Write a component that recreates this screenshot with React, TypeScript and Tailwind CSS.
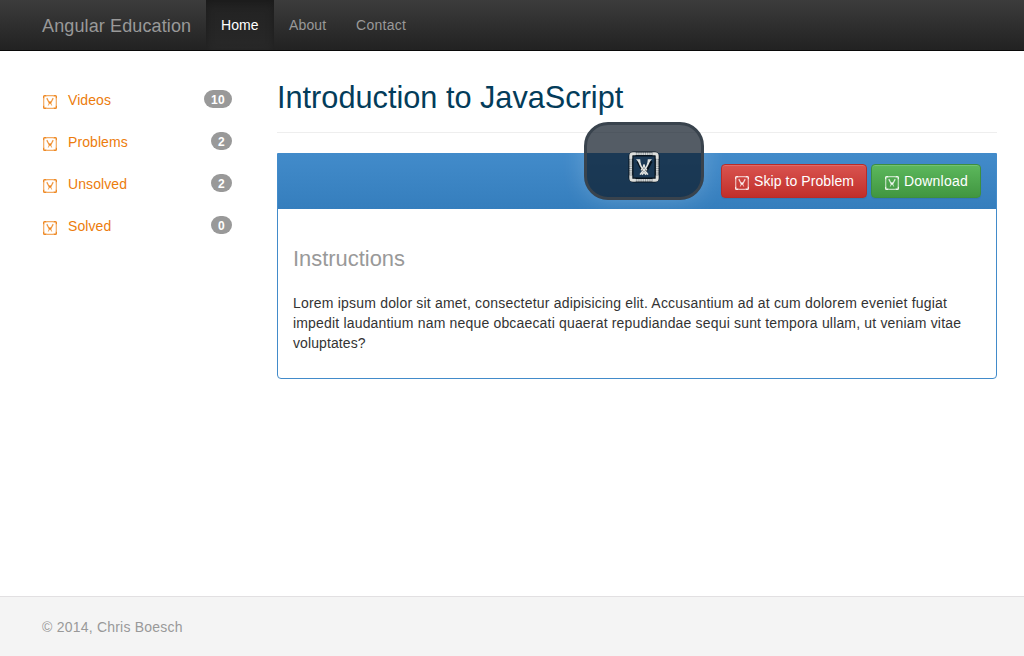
import React from "react";

function Emblem({ className }: { className: string }) {
  return (
    <svg viewBox="0 0 14 14" className={className} fill="none" stroke="currentColor" aria-hidden="true">
      <path d="M.7 3.500V1.500Q.7.700 1.500.700H3.500M10.500.700h2q.8 0 .8.800v2M13.300 10.500v2q0 .8-.8.800h-2M3.500 13.300h-2q-.8 0-.8-.8v-2" strokeWidth="1.400" opacity=".9" />
      <path d="M3.500.700h7M3.500 13.300h7M.7 3.500v7M13.300 3.500v7" strokeWidth="1.200" opacity=".65" />
      <path d="M3.700 3.300C5 4.500 4.900 6.800 7 8.500M10.300 3.300C9 4.500 9.100 6.800 7 8.500" strokeWidth="1.200" opacity=".8" />
      <path d="M7 6.200 5.300 10.500M7 6.200l1.700 4.300" strokeWidth="1" opacity=".7" />
    </svg>
  );
}

function LargeEmblem() {
  return (
    <svg viewBox="0 0 30 30" className="h-[30px] w-[30px] overflow-visible" fill="none" aria-hidden="true">
      <rect x="2" y="2" width="26" height="26" rx="2.500" stroke="#07131d" strokeWidth="5" />
      <path d="M1.800 6.500V3.800q0-2 2-2h2.700M23.500 1.800h2.700q2 0 2 2v2.700M28.200 23.500v2.700q0 2-2 2h-2.700M6.500 28.200H3.800q-2 0-2-2v-2.700" stroke="#dedfdc" strokeWidth="3" />
      <path d="M6 1.800h18M6 28.200h18M1.800 6v18M28.200 6v18" stroke="#9ba2a5" strokeWidth="2.600" />
      <path d="M6 1.800h18M6 28.200h18M1.800 6v18M28.200 6v18" stroke="#d5d8d7" strokeWidth="2.300" strokeDasharray="1.200 1" />
      <path d="M8.500 9.200c2.500 2 2.500 7 6.500 10M22.500 9.200c-2.500 2-2.500 7-6.500 10" stroke="#06121d" strokeWidth="3" />
      <path d="M6.800 7.200h4.400c.2 4.200 1.500 7.500 3.800 9.900 2.300-2.400 3.600-5.700 3.800-9.900h4.400c-3.100 1.700-3.200 7.400-8.200 12-5-4.600-5.100-10.300-8.200-12Z" fill="#dfe2e0" />
      <path d="M15 12.200c-.2 2.800-1.300 4.300-3 6.200M15 12.200c.2 2.800 1.300 4.300 3 6.200" stroke="#e5e6e2" strokeWidth="1.300" />
      <path d="M10.800 22.300c1.400 0 1.600-2.300 4.200-4.600 2.600 2.300 2.800 4.600 4.200 4.600M13 22.800l2-2.500 2 2.500" stroke="#dfe1de" strokeWidth="1.500" />
    </svg>
  );
}

const navigation = [
  { label: "Videos", count: 10 },
  { label: "Problems", count: 2 },
  { label: "Unsolved", count: 2 },
  { label: "Solved", count: 0 },
];

export default function App() {
  return (
    <div className="flex h-[656px] w-full flex-col bg-white font-['Liberation_Sans',Arial,sans-serif] text-sm leading-5 text-[#333]">
      <nav className="flex h-[51px] shrink-0 border-b border-[#090909] bg-linear-to-b from-[#3c3c3c] to-[#222] pl-[27px] text-[#999]">
        <a className="w-[179px] px-[15px] pt-4 text-lg leading-5 tracking-[0.12px] whitespace-nowrap">Angular Education</a>
        <a className="h-[50px] w-[68px] bg-linear-to-b from-[#222] to-[#282828] px-[15px] pt-[15px] tracking-[0.1px] text-white shadow-[inset_0_3px_9px_rgba(0,0,0,.25)]">Home</a>
        <a className="w-[67px] px-[15px] pt-[15px] tracking-[0.15px]">About</a>
        <a className="px-[15px] pt-[15px] tracking-[0.28px]">Contact</a>
      </nav>

      <div className="flex grow pl-[27px]">
        <aside className="w-[220px] pt-[29px]">
          {navigation.map((item) => (
            <a key={item.label} className="mb-0.5 flex h-10 items-start px-[15px] pt-2.5 text-[#ec7c0c]">
              <Emblem className="mt-[5px] mr-[11px] ml-px h-3.5 w-3.5" />
              <span className="tracking-[0.08px]">{item.label}</span>
              <span className="ml-auto h-[18px] rounded-[10px] bg-[#999] px-[7px] pt-[3px] text-center text-xs leading-[14px] font-bold tracking-[0.3px] text-white">{item.count}</span>
            </a>
          ))}
        </aside>

        <main className="ml-[30px] w-[720px]">
          <header className="h-[82px] border-b border-[#eee] pt-[30px]">
            <h1 className="text-[30.7px] leading-[33px] whitespace-nowrap text-[#033c5a]">Introduction to JavaScript</h1>
          </header>
          <section className="mt-5 h-[226px] rounded-b border border-[#428bca]">
            <div className="relative flex h-[55px] items-start justify-end gap-1 bg-linear-to-b from-[#428bca] to-[#357ebd] pt-2.5 pr-[15px] text-white">
              <div className="absolute top-[-32px] left-[306px] flex h-[78px] w-[120px] items-center justify-center rounded-[24px] border-[3px] border-[#39434d] bg-[rgba(11,23,35,.7)] pt-3 shadow-[0_0_24px_rgba(255,255,255,.2)]">
                <LargeEmblem />
              </div>
              <button className="flex h-[34px] w-[146px] items-start rounded border border-[#b92c28] bg-linear-to-b from-[#d9534f] to-[#c12e2a] pt-1.5 pl-[13px] tracking-[0.08px] whitespace-nowrap shadow-[inset_0_1px_0_rgba(255,255,255,.15),0_1px_1px_rgba(0,0,0,.075)]">
                <Emblem className="mt-[5px] mr-[5px] h-3.5 w-3.5" />Skip to Problem
              </button>
              <button className="flex h-[34px] w-[110px] items-start rounded border border-[#3e8f3e] bg-linear-to-b from-[#5cb85c] to-[#419641] pt-1.5 pl-[13px] tracking-[0.2px] whitespace-nowrap shadow-[inset_0_1px_0_rgba(255,255,255,.15),0_1px_1px_rgba(0,0,0,.075)]">
                <Emblem className="mt-[5px] mr-[5px] h-3.5 w-3.5" />Download
              </button>
            </div>
            <div className="px-[15px] pt-[39px]">
              <h2 className="text-[21.9px] leading-[22px] text-[#999]">Instructions</h2>
              <p className="mt-[23px] whitespace-nowrap">
                <span className="block tracking-[0.195px]">Lorem ipsum dolor sit amet, consectetur adipisicing elit. Accusantium ad at cum dolorem eveniet fugiat</span>
                <span className="block tracking-[0.175px]">impedit laudantium nam neque obcaecati quaerat repudiandae sequi sunt tempora ullam, ut veniam vitae</span>
                <span className="block tracking-[0.1px]">voluptates?</span>
              </p>
            </div>
          </section>
        </main>
      </div>

      <footer className="h-[60px] shrink-0 border-t border-[#e2e0e2] bg-[#f4f4f4] pt-5 pl-[42px] tracking-[0.22px] text-[#999]">
        © 2014, Chris Boesch
      </footer>
    </div>
  );
}
